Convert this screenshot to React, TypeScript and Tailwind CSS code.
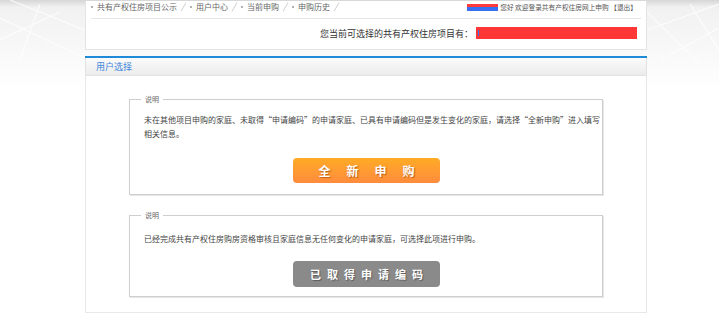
import React from "react";

const navItems = ["共有产权住房项目公示", "用户中心", "当前申购", "申购历史"];

export default function App() {
  return (
    <div className="relative w-[719px] h-[316px] overflow-hidden bg-white font-['Noto_Sans_CJK_SC','Noto_Sans',sans-serif] text-[#444]">
      {/* background decoration */}
      <div className="absolute inset-x-0 top-0 h-[90px] bg-gradient-to-b from-[#d6d6d6] via-[#f1f1f1] via-[8%] to-white" />
      <svg className="absolute left-0 top-0" width="719" height="90">
        <g stroke="#ffffff" strokeWidth="1.2" opacity="0.8" fill="none">
          <line x1="0" y1="18" x2="85" y2="58" />
          <line x1="10" y1="0" x2="85" y2="30" />
          <line x1="40" y1="4" x2="20" y2="60" />
          <line x1="0" y1="40" x2="60" y2="12" />
          <line x1="647" y1="30" x2="719" y2="4" />
          <line x1="660" y1="60" x2="719" y2="28" />
          <line x1="690" y1="4" x2="719" y2="50" />
          <line x1="647" y1="12" x2="700" y2="64" />
        </g>
      </svg>

      <div className="relative ml-[85px] w-[562px]">
        {/* header box */}
        <div className="h-[49px] bg-white border-x border-b border-[#e4e4e4] mt-[1px]">
          <div className="flex h-[12px] items-center justify-between pl-[5px] pr-[9px]">
            <div className="flex items-center text-[8px] leading-[10px] text-[#666]">
              {navItems.map((t) => (
                <div key={t} className="flex items-center">
                  <span className="mr-[4px] h-[2px] w-[2px] rounded-full bg-[#999]" />
                  <span>{t}</span>
                  <span className="ml-[3px] mr-[4px] flex h-[10px] w-[6px] items-center justify-center">
                    <span className="block h-[10px] w-px rotate-[30deg] bg-[#d4d4d4]" />
                  </span>
                </div>
              ))}
            </div>
            <div className="flex items-center text-[6.7px] leading-none text-[#555]">
              <span className="relative mr-[2px] inline-block h-[7px] w-[31px]">
                <span className="absolute inset-x-0 top-[3px] h-[4px] bg-[#3a6ff0]" />
                <span className="absolute inset-x-0 top-0 h-[3px] bg-[#ff3b3b]" />
              </span>
              <span>您好 欢迎登录共有产权住房网上申购 【退出】</span>
            </div>
          </div>
          <div className="mx-[5px] mt-[5px] border-t border-[#e6e6e6]" />
          <div className="mt-[7px] flex h-[14px] items-center justify-end pr-[9px]">
            <span className="text-[9px] leading-none text-[#333]">您当前可选择的共有产权住房项目有：</span>
            <span className="relative ml-[3px] h-[12px] w-[161px] bg-[#ff3636]">
              <span className="absolute left-[2px] top-[3px] h-[6px] w-[1px] bg-[#3a6ff0]" />
            </span>
          </div>
        </div>

        {/* panel */}
        <div className="mt-[6px] border-t-2 border-[#1e8ad8]">
          <div className="h-[18px] border-x border-b border-[#e2e2e2] bg-gradient-to-b from-[#fbfbfb] to-[#ececec] flex items-center pl-[10px]">
            <span className="text-[9px] leading-none text-[#3d86dc]">用户选择</span>
          </div>
          <div className="h-[237px] border-x border-b border-[#e8e8e8] bg-white px-[43px] pt-[23px]">
            {/* fieldset 1 */}
            <div className="relative h-[96px] border border-[#cfcfcf] shadow-[1px_1px_0_#e6e6e6] pl-[14px] pt-[13px]">
              <span className="absolute left-[11px] top-[-5px] bg-white px-[4px] text-[7px] leading-[9px] text-[#666]">说明</span>
              <p className="whitespace-nowrap text-[8px] leading-[14px] text-[#444]">
                未在其他项目申购的家庭、未取得“申请编码”的申请家庭、已具有申请编码但是发生变化的家庭，请选择“全新申购”进入填写
                <br />
                相关信息。
              </p>
              <div className="mt-[17px] ml-[149px] flex h-[25px] w-[147px] items-center justify-center rounded-[4px] bg-gradient-to-b from-[#ffab24] to-[#ff8b3c] pl-[16px] text-[12px] font-bold tracking-[16px] text-white [text-shadow:1px_1px_1px_rgba(150,60,0,0.6)]">
                全新申购
              </div>
            </div>

            {/* fieldset 2 */}
            <div className="relative mt-[20px] h-[82px] border border-[#cfcfcf] shadow-[1px_1px_0_#e6e6e6] pl-[14px] pt-[16px]">
              <span className="absolute left-[11px] top-[-5px] bg-white px-[4px] text-[7px] leading-[9px] text-[#666]">说明</span>
              <p className="whitespace-nowrap text-[8px] leading-[14px] text-[#444]">
                已经完成共有产权住房购房资格审核且家庭信息无任何变化的申请家庭，可选择此项进行申购。
              </p>
              <div className="mt-[15px] ml-[149px] flex h-[26px] w-[147px] items-center justify-center rounded-[4px] bg-[#8a8a8a] pl-[6px] text-[11px] font-bold tracking-[6px] text-white [text-shadow:1px_1px_1px_rgba(0,0,0,0.35)]">
                已取得申请编码
              </div>
            </div>
          </div>
        </div>
      </div>
    </div>
  );
}
